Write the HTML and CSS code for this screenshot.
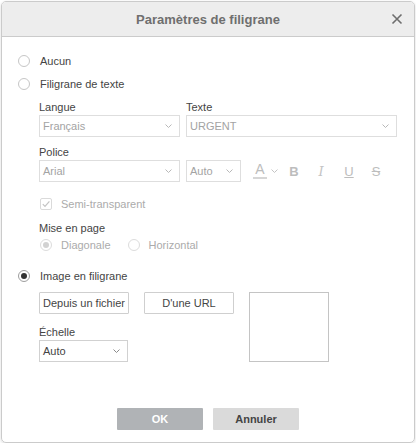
FILE: index.html
```html
<!DOCTYPE html>
<html lang="fr">
<head>
<meta charset="utf-8">
<title>Paramètres de filigrane</title>
<link rel="stylesheet" href="styles.css">
</head>
<body>
<div class="dialog">
  <div class="header">
    <span class="title">Paramètres de filigrane</span>
    <svg class="close" width="12" height="12" viewBox="0 0 12 12"><path d="M1.5 1.5 L10.5 10.5 M10.5 1.5 L1.5 10.5" stroke="#6e6e6e" stroke-width="1.6" fill="none"/></svg>
  </div>
  <div class="content">
    <div class="opt row-aucun"><span class="radio"></span><span>Aucun</span></div>
    <div class="opt row-texte"><span class="radio"></span><span>Filigrane de texte</span></div>
    <div class="sub">
      <div class="fields row-langue">
        <div class="col-a"><div class="lbl">Langue</div><div class="select dis"><span>Français</span><svg class="chev" width="7" height="4" viewBox="0 0 7 4"><path d="M0.5 0.5 L3.5 3.5 L6.5 0.5" stroke="#b8b8b8" fill="none"/></svg></div></div>
        <div class="col-b"><div class="lbl">Texte</div><div class="select dis"><span>URGENT</span><svg class="chev" width="7" height="4" viewBox="0 0 7 4"><path d="M0.5 0.5 L3.5 3.5 L6.5 0.5" stroke="#b8b8b8" fill="none"/></svg></div></div>
      </div>
      <div class="fields row-police">
        <div class="col-a"><div class="lbl">Police</div><div class="select dis"><span>Arial</span><svg class="chev" width="7" height="4" viewBox="0 0 7 4"><path d="M0.5 0.5 L3.5 3.5 L6.5 0.5" stroke="#b8b8b8" fill="none"/></svg></div></div>
        <div class="col-c">
          <div class="lbl">&nbsp;</div>
          <div class="tools">
            <div class="select dis size"><span>Auto</span><svg class="chev" width="7" height="4" viewBox="0 0 7 4"><path d="M0.5 0.5 L3.5 3.5 L6.5 0.5" stroke="#b8b8b8" fill="none"/></svg></div>
            <div class="color"><span class="acolor">A</span><svg class="chev" width="7" height="4" viewBox="0 0 7 4"><path d="M0.5 0.5 L3.5 3.5 L6.5 0.5" stroke="#c4c4c4" fill="none"/></svg></div>
            <span class="tb bold">B</span>
            <span class="tb ital">I</span>
            <span class="tb under">U</span>
            <span class="tb strike">S</span>
          </div>
        </div>
      </div>
      <div class="opt check-row"><span class="check"><svg width="10" height="10" viewBox="0 0 10 10"><path d="M1.8 5.2 L4 7.4 L8.4 2.4" stroke="#c4c4c4" stroke-width="1.2" fill="none"/></svg></span><span class="dtext">Semi-transparent</span></div>
      <div class="lbl row-mise">Mise en page</div>
      <div class="opt row-layout">
        <span class="radio dis on-dis"></span><span class="dtext">Diagonale</span>
        <span class="radio dis hz"></span><span class="dtext">Horizontal</span>
      </div>
    </div>
    <div class="opt row-image"><span class="radio on"></span><span>Image en filigrane</span></div>
    <div class="sub image-area">
      <div class="img-left">
        <div class="btn">Depuis un fichier</div>
        <div class="lbl row-echelle">Échelle</div>
        <div class="select scale"><span>Auto</span><svg class="chev" width="7" height="4" viewBox="0 0 7 4"><path d="M0.5 0.5 L3.5 3.5 L6.5 0.5" stroke="#8a8a8a" fill="none"/></svg></div>
      </div>
      <div class="btn url">D'une URL</div>
      <div class="preview"></div>
    </div>
  </div>
  <div class="footer">
    <div class="fbtn ok">OK</div>
    <div class="fbtn cancel">Annuler</div>
  </div>
</div>
</body>
</html>
```

FILE: styles.css
```css
* { box-sizing: border-box; }
html, body { margin: 0; padding: 0; background: #fff; }
body {
  font-family: Arial, "Liberation Sans", sans-serif;
  font-size: 11px;
  color: #444;
}
.dialog {
  margin: 1px 0 0 1px;
  width: 414px;
  height: 442px;
  border: 1px solid #cbcbcb;
  border-radius: 5px;
  box-shadow: 0 1px 3px rgba(0,0,0,0.15);
  display: flex;
  flex-direction: column;
  overflow: hidden;
}
.header {
  height: 35px;
  background: #ededed;
  border-bottom: 1px solid #cbcbcb;
  display: flex;
  align-items: center;
  justify-content: center;
  position: relative;
  flex: none;
}
.title {
  font-size: 13px;
  font-weight: bold;
  color: #6f6f6f;
}
.close {
  position: absolute;
  right: 11px;
  top: 11px;
}
.content {
  padding: 17px 17px 0 16px;
}
.opt {
  display: flex;
  align-items: center;
  height: 14px;
  line-height: 14px;
  white-space: nowrap;
}
.radio {
  width: 12px;
  height: 12px;
  border: 1px solid #c6c6c6;
  border-radius: 50%;
  margin-right: 10px;
  flex: none;
  position: relative;
}
.radio.on { border-color: #9e9e9e; }
.radio.on::after {
  content: "";
  position: absolute;
  left: 2px; top: 2px;
  width: 6px; height: 6px;
  border-radius: 50%;
  background: #333;
}
.radio.dis { border-color: #dcdcdc; margin-right: 9px; }
.radio.on-dis::after {
  content: "";
  position: absolute;
  left: 2px; top: 2px;
  width: 6px; height: 6px;
  border-radius: 50%;
  background: #d2d2d2;
}
.radio.hz { margin-left: 17px; }
.dtext { color: #ababab; }
.row-texte { margin-top: 9px; }
.sub { padding-left: 21px; }
.fields { display: flex; gap: 6px; }
.row-langue { margin-top: 9px; }
.row-police { margin-top: 8px; }
.lbl { height: 14px; line-height: 14px; margin-bottom: 1px; color: #444; }
.col-a { width: 141px; }
.col-b { width: 211px; }
.select {
  height: 22px;
  border: 1px solid #d1d1d1;
  display: flex;
  align-items: center;
  justify-content: space-between;
  padding: 0 7px 0 3px;
  background: #fff;
}
.select.dis { color: #a3a3a3; border-color: #dedede; }
.select .chev { flex: none; }
.tools { display: flex; align-items: center; height: 22px; }
.size { width: 55px; }
.color { display: flex; align-items: center; margin-left: 12px; width: 34px; }
.acolor {
  color: #bdbdbd;
  font-size: 14px;
  width: 14px;
  text-align: center;
  line-height: 13px;
  border-bottom: 2px solid #d6d6d6;
  margin-right: 4px;
  padding-bottom: 1px;
}
.tb { color: #bdbdbd; font-size: 13px; text-align: center; width: 12px; }
.bold { font-weight: bold; margin-left: 1px; }
.ital { font-family: "DejaVu Serif", serif; font-style: italic; font-weight: 300; margin-left: 15px; color: #c4c4c4; }
.under { text-decoration: underline; margin-left: 16px; }
.strike { text-decoration: line-through; margin-left: 15px; }
.check-row { margin-top: 15px; padding-left: 1px; }
.check {
  width: 12px; height: 12px;
  border: 1px solid #dadada;
  border-radius: 2px;
  margin-right: 9px;
  display: flex; align-items: center; justify-content: center;
  flex: none;
}
.row-mise { margin-top: 10px; }
.row-layout { margin-top: 3px; padding-left: 1px; }
.row-image { margin-top: 17px; }
.image-area { display: flex; align-items: flex-start; margin-top: 9px; }
.img-left { width: 90px; }
.btn {
  height: 22px;
  border: 1px solid #cfcfcf;
  border-radius: 1px;
  display: flex; align-items: center; justify-content: center;
  color: #444;
  white-space: nowrap;
  width: 90px;
}
.url { margin-left: 15px; }
.row-echelle { margin-top: 11px; }
.select.scale { width: 89px; color: #444; }
.preview {
  width: 80px; height: 70px;
  border: 1px solid #c4c4c4;
  margin-left: 15px;
}
.footer {
  margin-top: auto;
  padding-bottom: 12px;
  display: flex;
  justify-content: center;
  gap: 10px;
}
.fbtn {
  width: 86px;
  height: 22px;
  display: flex; align-items: center; justify-content: center;
  font-weight: bold;
  border-radius: 1px;
}
.ok { background: #b0b3b6; color: #fff; }
.cancel { background: #dadada; color: #444; }
```
